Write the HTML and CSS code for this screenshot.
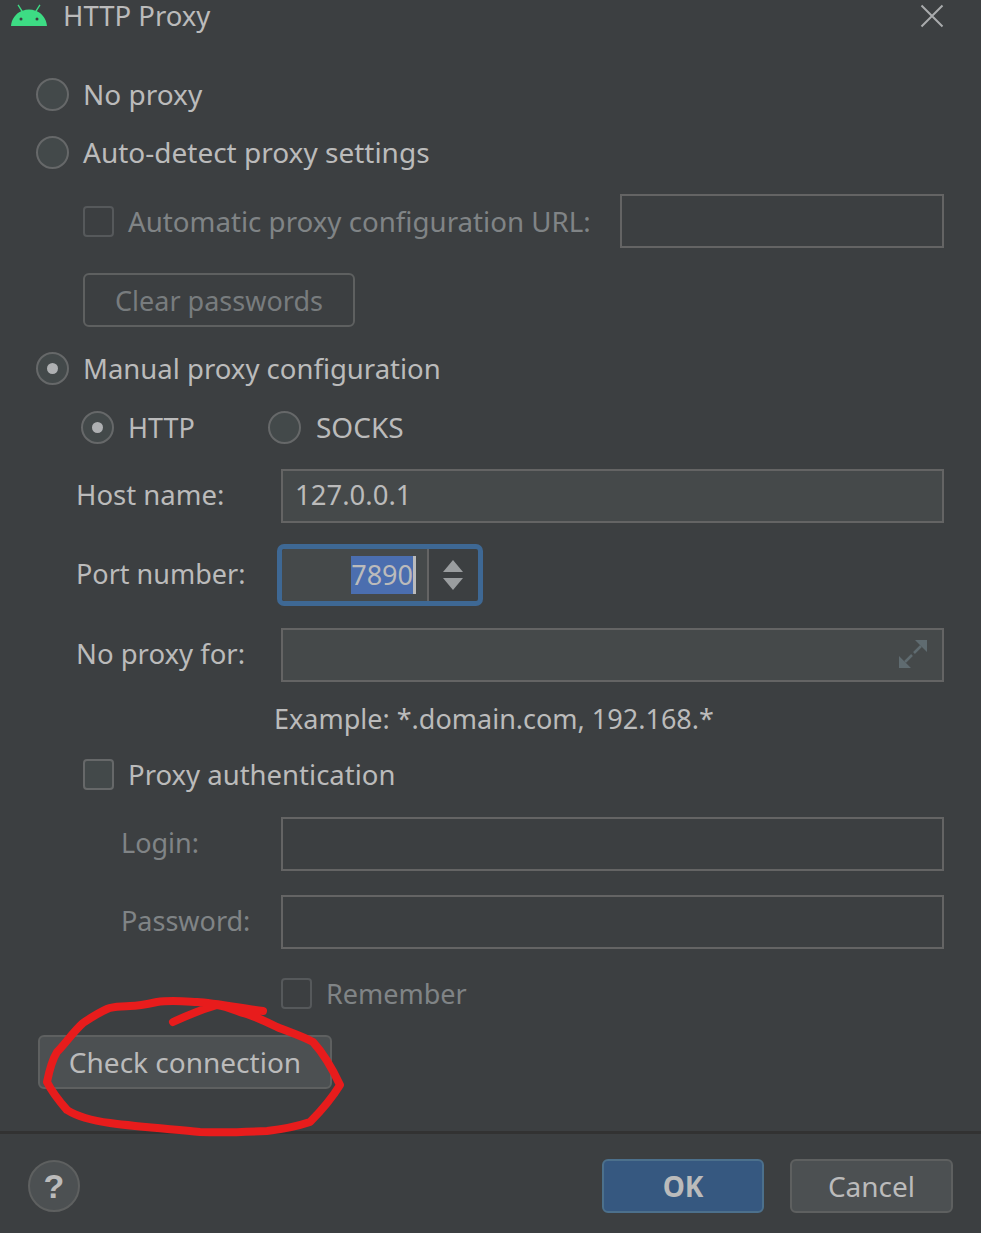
FILE: index.html
```html
<!DOCTYPE html>
<html lang="en">
<head>
    <meta charset="utf-8">
    <title>HTTP Proxy</title>
    <link rel="stylesheet" href="styles.css">
</head>
<body>
    <div class="dialog">
        <div class="title-bar">
            <svg class="android" viewBox="0 0 36 24" width="36" height="24">
                <path d="M0 22C.6 15 4.600 9.800 10.200 7.300L6.500 1.200 7.600 .5 11.600 6.700C15.600 5.200 20.400 5.200 24.400 6.700L28.400 .5 29.500 1.200 25.800 7.300C31.400 9.800 35.400 15 36 22Z" fill="#3ddc84"/>
                <circle cx="10" cy="15" r="1.500" fill="#3c3f41"/>
                <circle cx="26" cy="15" r="1.500" fill="#3c3f41"/>
            </svg>
            <span class="title">HTTP Proxy</span>
            <svg class="close" viewBox="0 0 24 24" width="24" height="24">
                <path d="M1.500 1.500L22.500 22.500M22.500 1.500L1.500 22.500" stroke="#a9abad" stroke-width="2" fill="none"/>
            </svg>
        </div>

        <div class="row row-no-proxy"><span class="radio"></span><span>No proxy</span></div>
        <div class="row row-auto"><span class="radio"></span><span>Auto-detect proxy settings</span></div>

        <div class="row row-auto-url">
            <span class="check"></span>
            <span class="muted auto-url-label">Automatic proxy configuration URL:</span>
            <span class="field field-url"></span>
        </div>
        <button class="btn btn-clear" disabled>Clear passwords</button>

        <div class="row row-manual"><span class="radio on"></span><span>Manual proxy configuration</span></div>
        <div class="row row-type">
            <span class="radio on"></span><span class="type-http">HTTP</span>
            <span class="radio"></span><span class="type-socks">SOCKS</span>
        </div>

        <div class="row row-host">
            <span class="label">Host name:</span>
            <span class="field field-fill active">127.0.0.1</span>
        </div>
        <div class="row row-port">
            <span class="label label-port">Port number:</span>
            <div class="spinner">
                <div class="spin-value"><span class="selected">7890</span><span class="caret"></span></div>
                <svg class="spin-arrows" viewBox="0 0 22 32" width="22" height="32">
                    <path d="M11 1L21 13H1ZM1 19H21L11 31Z" fill="#9a9d9f"/>
                </svg>
            </div>
        </div>
        <div class="row row-noproxy-for">
            <span class="label">No proxy for:</span>
            <span class="field field-fill active expand-field">
                <svg class="expand" viewBox="0 0 30 30" width="30" height="30">
                    <path d="M17 1H29V13ZM1 17V29H13Z" fill="#5f6b70"/>
                    <path d="M23 7L16 14M7 23L14 16" stroke="#5f6b70" stroke-width="2.500" fill="none"/>
                </svg>
            </span>
        </div>
        <div class="example">Example: *.domain.com, 192.168.*</div>

        <div class="row row-auth"><span class="check active"></span><span class="auth-label">Proxy authentication</span></div>
        <div class="row row-login">
            <span class="label muted indented">Login:</span>
            <span class="field field-fill"></span>
        </div>
        <div class="row row-password">
            <span class="label muted indented">Password:</span>
            <span class="field field-fill"></span>
        </div>
        <div class="row row-remember"><span class="check"></span><span class="muted remember-label">Remember</span></div>

        <button class="btn btn-check">Check connection</button>

        <div class="footer">
            <span class="help">?</span>
            <button class="btn btn-ok">OK</button>
            <button class="btn btn-cancel">Cancel</button>
        </div>

        <!-- red marker drawn over the screenshot -->
        <svg class="scribble" viewBox="0 0 981 1233" width="981" height="1233">
            <path d="M263 1011C240 1008 215 1003 197 1002C180 1001 170 1000 157 1002C148 1004 138 1006 130 1006C120 1007 114 1006 107 1009C98 1013 92 1017 83 1023C73 1032 65 1044 57 1052C52 1060 49 1072 47 1082C52 1092 60 1102 67 1110C78 1117 95 1121 110 1123C140 1127 170 1129 200 1132C225 1133 247 1132 267 1131C285 1129 298 1126 310 1122C320 1112 332 1098 340 1085C333 1070 324 1054 313 1042C302 1036 289 1032 277 1027C265 1021 252 1015 240 1012C232 1009 225 1006 217 1005C203 1009 188 1015 173 1022" fill="none" stroke="#e81c1c" stroke-width="8" stroke-linecap="round" stroke-linejoin="round"/>
        </svg>
    </div>
</body>
</html>
```

FILE: styles.css
```css
html, body {
    margin: 0;
    background-color: #3c3f41;
}

.dialog {
    position: relative;
    width: 981px;
    height: 1233px;
    overflow: hidden;
    background-color: #3c3f41;
    color: #bbbbbb;
    font-family: "Noto Sans", sans-serif;
    font-size: 28px;
}

.title-bar {
    display: flex;
    align-items: center;
    height: 32px;
    padding: 0 37px 0 11px;
}

.android {
    margin-right: 16px;
}

.title {
    flex: 1;
    font-size: 27.500px;
    line-height: 30px;
}

.row {
    display: flex;
    align-items: center;
}

.radio {
    box-sizing: border-box;
    flex: none;
    display: flex;
    align-items: center;
    justify-content: center;
    width: 33px;
    height: 33px;
    margin-right: 14px;
    border: 2px solid #666869;
    border-radius: 50%;
    background-color: #43494a;
}

.radio.on::after {
    content: "";
    width: 11px;
    height: 11px;
    border-radius: 50%;
    background-color: #aeb0b2;
}

.check {
    box-sizing: border-box;
    flex: none;
    width: 31px;
    height: 31px;
    margin-right: 14px;
    border: 2px solid #56595b;
    border-radius: 4px;
}

.check.active {
    border-color: #666869;
    background-color: #43494a;
}

.muted {
    color: #808486;
}

.field {
    box-sizing: border-box;
    display: block;
    height: 54px;
    border: 2px solid #646464;
    line-height: 48px;
}

.field.active {
    background-color: #45494a;
    font-size: 27.500px;
}

.field-fill {
    flex: 1;
    padding-left: 12px;
}

.label {
    width: 205px;
    flex: none;
    font-size: 27.500px;
    line-height: 36px;
    margin-top: -2px;
}

.label-port {
    font-size: 27px;
}

.label.indented {
    width: 160px;
    margin-left: 45px;
    font-size: 27px;
}

.btn {
    box-sizing: border-box;
    display: block;
    height: 54px;
    padding: 0;
    border: 2px solid #5e6060;
    border-radius: 6px;
    background-color: #4c5052;
    color: #bbbbbb;
    font: inherit;
}

.row-no-proxy {
    height: 34px;
    margin: 45px 0 0 36px;
}

.row-auto {
    height: 34px;
    margin: 24px 0 0 36px;
}

.row-auto-url {
    margin: 25px 37px 0 83px;
}

.auto-url-label {
    width: 492px;
    flex: none;
    font-size: 27.700px;
}

.field-url {
    flex: 1;
}

.btn-clear {
    width: 272px;
    margin: 25px 0 0 83px;
    border-color: #5e6060;
    background-color: transparent;
    color: #787c7e;
    font-size: 27px;
}

.row-manual {
    height: 34px;
    margin: 24px 0 0 36px;
    font-size: 27.500px;
}

.row-type {
    height: 34px;
    margin: 25px 0 0 81px;
}

.type-http {
    width: 140px;
    font-size: 27px;
}

.type-socks {
    margin-left: 1px;
}

.row-host {
    margin: 25px 37px 0 76px;
}

.row-port {
    margin: 21px 37px 0 76px;
}

.spinner {
    box-sizing: border-box;
    display: flex;
    width: 206px;
    height: 62px;
    margin-left: -4px;
    border: 5px solid #3e6894;
    border-radius: 7px;
}

.spin-value {
    display: flex;
    align-items: center;
    justify-content: flex-end;
    box-sizing: border-box;
    width: 147px;
    padding-right: 11px;
    border-right: 2px solid #646464;
    border-radius: 3px 0 0 3px;
    background-color: #45494a;
    font-size: 27px;
}

.selected {
    background-color: #4b6eaf;
    line-height: 38px;
}

.caret {
    width: 3px;
    height: 38px;
    background-color: #bbbbbb;
}

.spin-arrows {
    margin: 10px 0 0 13px;
}

.row-noproxy-for {
    margin: 22px 37px 0 76px;
}

.expand-field {
    position: relative;
}

.expand {
    position: absolute;
    right: 14px;
    top: 9px;
}

.example {
    margin: 18px 0 0 274px;
    font-size: 27px;
    line-height: 38px;
}

.row-auth {
    height: 34px;
    margin: 19px 0 0 83px;
    font-size: 27.500px;
}

.row-login {
    margin: 26px 37px 0 76px;
}

.row-password {
    margin: 24px 37px 0 76px;
}

.row-remember {
    height: 34px;
    margin: 27px 0 0 281px;
    font-size: 27px;
}

.btn-check {
    width: 294px;
    margin: 25px 0 0 38px;
}

.footer {
    display: flex;
    align-items: center;
    height: 54px;
    margin-top: 42px;
    padding: 25px 28px 0;
    border-top: 3px solid #323232;
}

.help {
    box-sizing: border-box;
    width: 52px;
    height: 52px;
    border: 2px solid #5e6060;
    border-radius: 50%;
    background-color: #4c5052;
    font-family: "Liberation Sans", sans-serif;
    font-weight: bold;
    font-size: 34px;
    line-height: 48px;
    text-align: center;
}

.btn-ok {
    width: 162px;
    margin-left: auto;
    border-color: #4c708c;
    background-color: #365880;
    font-weight: bold;
}

.btn-cancel {
    width: 163px;
    margin-left: 26px;
}

.scribble {
    position: absolute;
    left: 0;
    top: 0;
    pointer-events: none;
}
```
